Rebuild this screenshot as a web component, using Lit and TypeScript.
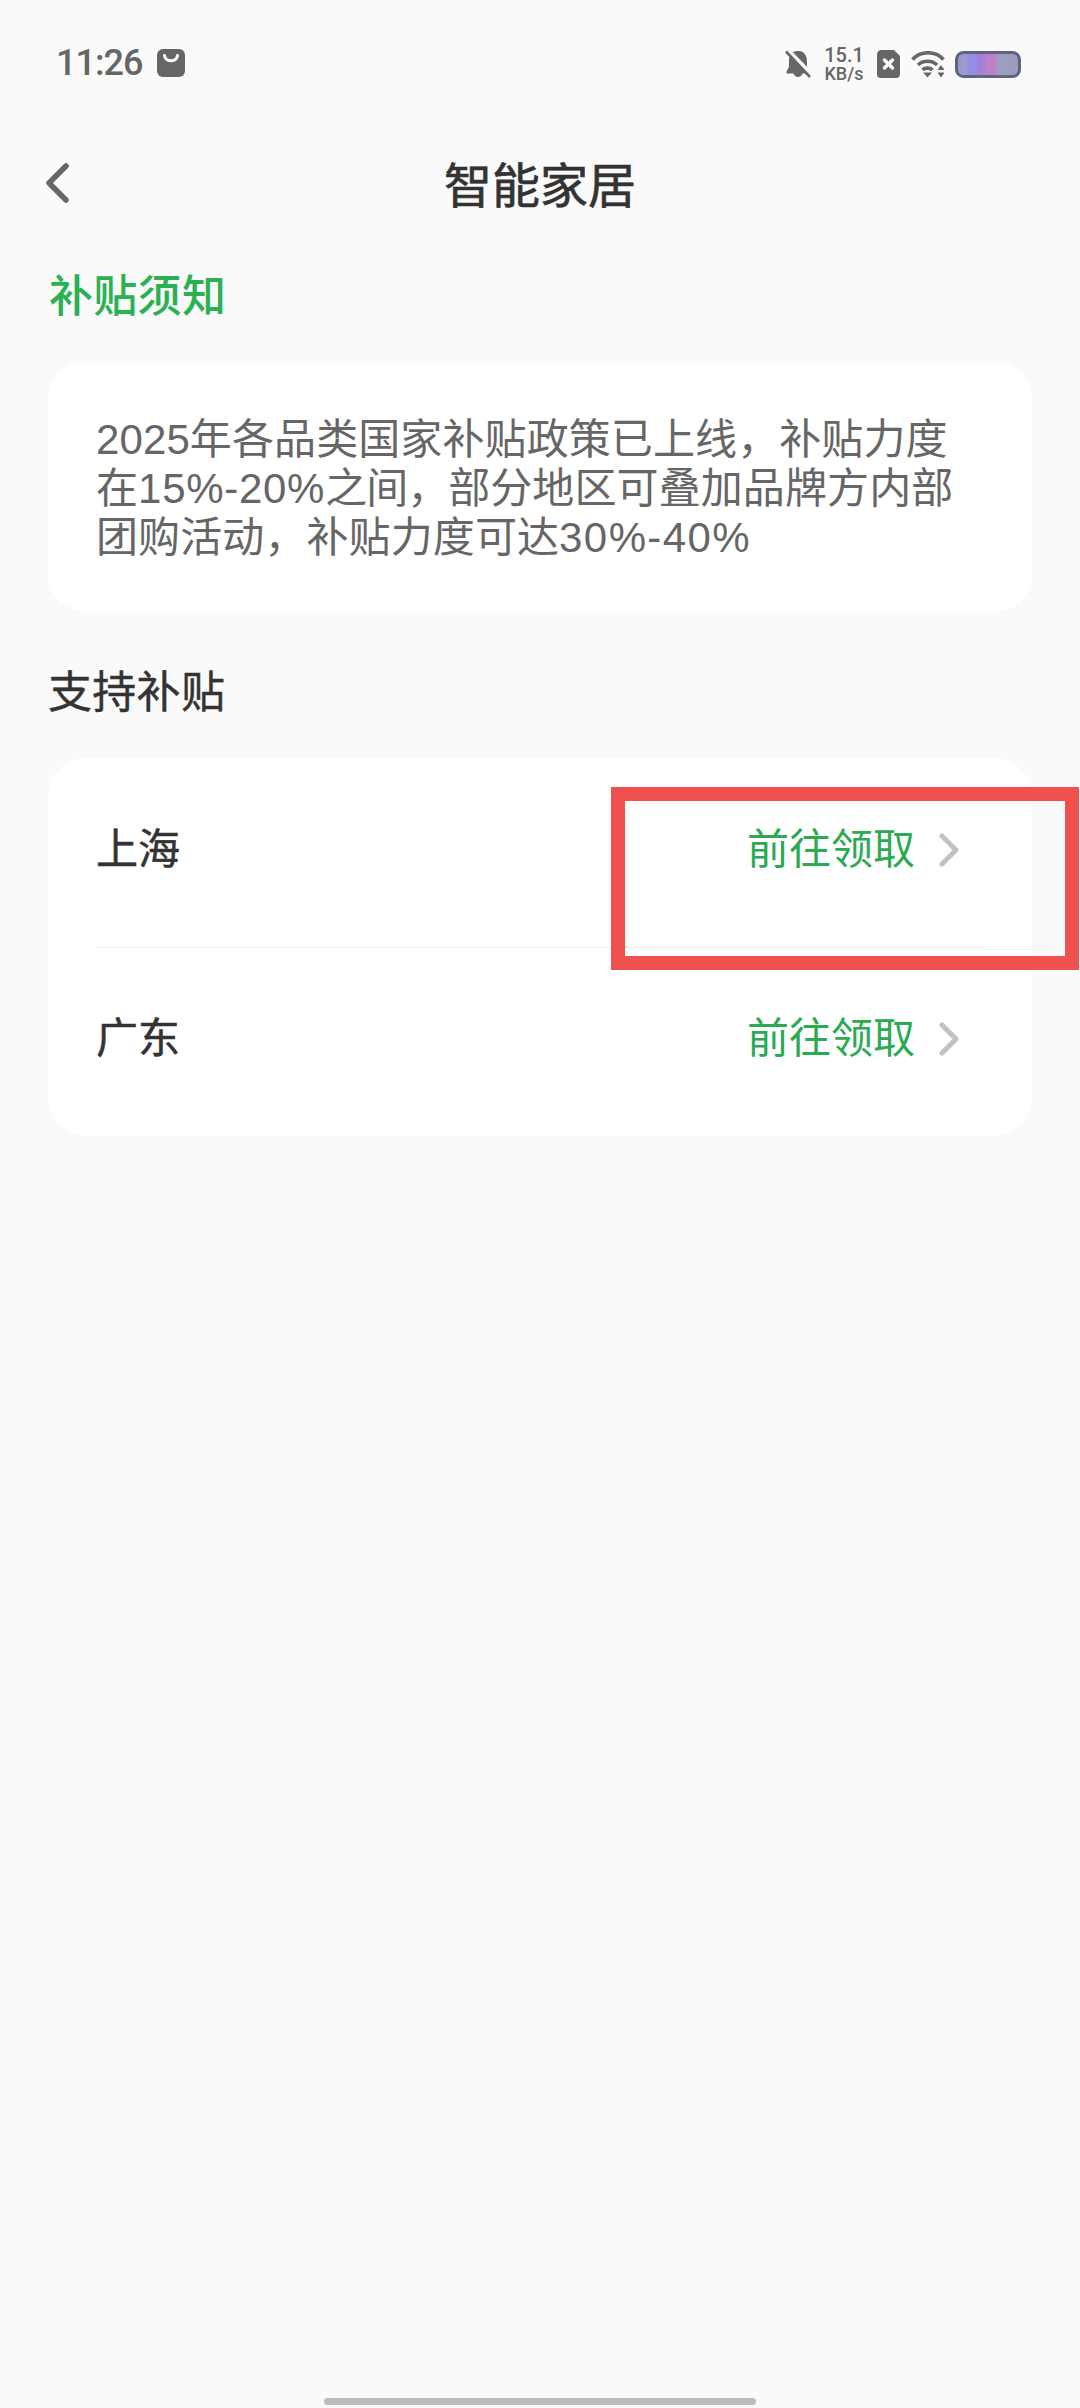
import { LitElement, html, css } from "lit";
import { customElement } from "lit/decorators.js";

@customElement("app-root")
export class AppRoot extends LitElement {
  static styles = css`
    :host { display: block; width: 1080px; height: 2408px; background: #fafafa; position: relative; overflow: hidden;
      font-family: "Liberation Sans", "Noto Sans CJK SC", sans-serif; }
    .status { height: 128px; box-sizing: border-box; padding: 43px 58px 0 56px; display: flex; align-items: flex-start; justify-content: space-between; color: #666; }
    .status-left { display: flex; align-items: center; gap: 15px; height: 40px; }
    .time { font-family: Roboto, sans-serif; font-size: 36px; line-height: 40px; font-weight: 500; letter-spacing: -1px; }
    .status-right { display: flex; align-items: center; height: 40px; margin-top: 1px; }
    .net { font-family: Roboto, sans-serif; font-weight: 500; font-size: 18px; line-height: 18px; margin: 0 14px; width: 38px; white-space: nowrap; display: flex; flex-direction: column; align-items: center; }
    .net .a { font-size: 20px; line-height: 19px; }
    .sim { margin-right: 11px; }
    .wifi { margin-right: 9px; }
    .header { height: 86px; position: relative; display: flex; align-items: center; justify-content: center; margin-top: 16px; }
    .back { position: absolute; left: 43px; top: 18px; }
    .title { font-size: 48px; line-height: 60px; color: #333; -webkit-text-stroke: 0.7px #333; }
    .section-green { font-size: 44px; line-height: 60px; font-weight: 500; color: #2bb052; margin: 37px 0 0 49px; letter-spacing: 0.3px; }
    .notice { margin: 34px 48px 0; background: #fff; border-radius: 38px; height: 251px; box-sizing: border-box; padding: 54px 46px 0 48px; font-size: 42px; line-height: 49px; color: #666; letter-spacing: 0.1px; }
    .notice div { white-space: nowrap; }
    .lat2 { letter-spacing: 0.7px; }
    .tight { letter-spacing: -1px; }
    .lat3 { letter-spacing: 1.4px; }
    .section { font-size: 44px; line-height: 60px; color: #333; -webkit-text-stroke: 0.4px #333; margin: 51px 0 0 48px; letter-spacing: 0.3px; }
    .card { margin: 35px 48px 0; background: #fff; border-radius: 38px; padding: 0 49px 0 48px; height: 378px; box-sizing: border-box; }
    .row { height: 189px; display: flex; align-items: center; justify-content: space-between; box-sizing: border-box; }
    .row + .row { border-top: 1px solid #eeeeea; }
    .name { font-size: 42px; color: #333; line-height: 60px; -webkit-text-stroke: 0.5px #333; }
    .link { display: flex; align-items: center; gap: 24px; font-size: 42px; line-height: 60px; color: #2baa52; margin-right: 24px; }
    .row-inner { display: flex; align-items: center; justify-content: space-between; width: 100%; margin-top: -6px; }
    .red { position: absolute; left: 611px; top: 787px; width: 468px; height: 183px; box-sizing: border-box; border: 14px solid #ef524e; }
    .home { position: absolute; left: 324px; top: 2398px; width: 432px; height: 7px; border-radius: 4px; background: #bbb; }
    svg { display: block; }
  `;

  private chevron() {
    return html`<svg width="20" height="34" viewBox="0 0 20 34"><path d="M3 3 L17 17 L3 31" fill="none" stroke="#c2c2c2" stroke-width="5" stroke-linecap="round" stroke-linejoin="round"/></svg>`;
  }

  private row(name: string) {
    return html`<div class="row"><div class="row-inner">
      <span class="name">${name}</span>
      <span class="link"><span>前往领取</span>${this.chevron()}</span>
    </div></div>`;
  }

  render() {
    return html`
      <div class="status">
        <div class="status-left">
          <span class="time">11:26</span>
          <svg width="28" height="28" viewBox="0 0 28 28"><rect width="28" height="28" rx="6" fill="#666"/><path d="M7.5 6.5 C8.5 13.5 19.5 13.5 20.5 6.5" fill="none" stroke="#fff" stroke-width="3" stroke-linecap="round"/></svg>
        </div>
        <div class="status-right">
          <svg width="26" height="28" viewBox="0 0 26 28"><path d="M13 1 C6.5 1 4 6 4 11 L4 17 L1.5 21.5 L1.5 23.5 L8.5 23.5 C9.5 28 16.5 28 17.5 23.5 L24.5 23.5 L24.5 21.5 L22 17 L22 11 C22 6 19.5 1 13 1 Z" fill="#666"/><path d="M3 0 L27 25" stroke="#fafafa" stroke-width="4"/><path d="M1 1.5 L25 27" stroke="#666" stroke-width="2.6"/></svg>
          <div class="net"><span class="a">15.1</span><span>KB/s</span></div>
          <svg class="sim" width="23" height="28" viewBox="0 0 23 28"><path d="M5 0 L17 0 L23 6 L23 24 Q23 28 19 28 L4 28 Q0 28 0 24 L0 5 Q0 0 5 0 Z" fill="#666"/><path d="M7.5 10 L15.5 18 M15.5 10 L7.5 18" stroke="#fff" stroke-width="3.4" stroke-linecap="round"/></svg>
          <svg class="wifi" width="34" height="27" viewBox="0 0 34 27">
            <g fill="none" stroke="#666" stroke-width="3.6"><path d="M1.5 8.5 C9.5 -0.5 24.5 -0.5 32.5 8.5"/><path d="M7 14 C12 9 21 9 26 14"/><path d="M11.5 18.8 C14 16.6 19 16.6 21.5 18.8"/></g>
            <path d="M12 21.5 L21 21.5 L16.5 26.5 Z M30 14 L33.5 19 L26.5 19 Z M26.5 21.5 L33.5 21.5 L30 26.5 Z" fill="#666"/>
          </svg>
          <svg width="68" height="27" viewBox="0 0 68 27">
            <defs><linearGradient id="b" x1="0" x2="1" y1="0" y2="0">
              <stop offset="0" stop-color="#949ec4"/><stop offset=".15" stop-color="#9a9bd0"/><stop offset=".2" stop-color="#8f8fe8"/><stop offset=".3" stop-color="#9a8ae4"/><stop offset=".36" stop-color="#a080d8"/><stop offset=".44" stop-color="#a682d4"/><stop offset=".48" stop-color="#b484cc"/><stop offset=".58" stop-color="#c47cc8"/><stop offset=".68" stop-color="#9f9dc0"/><stop offset="1" stop-color="#989dbc"/>
            </linearGradient></defs>
            <rect x="2.5" y="1.5" width="63" height="24" rx="7" fill="url(#b)" stroke="#5f6580" stroke-width="3"/>
          </svg>
        </div>
      </div>
      <div class="header">
        <svg class="back" width="28" height="42" viewBox="0 0 28 42"><path d="M23 4 L6 21 L23 38" fill="none" stroke="#666" stroke-width="5.5" stroke-linecap="round" stroke-linejoin="round"/></svg>
        <span class="title">智能家居</span>
      </div>
      <div class="section-green">补贴须知</div>
      <div class="notice">
        <div>2025年各品类国家补贴政策已上线，补贴力度</div>
        <div>在<span class="lat2">15%-20%</span><span class="tight">之间，</span>部分地区可叠加品牌方内部</div>
        <div>团购活动，补贴力度可达<span class="lat3">30%-40%</span></div>
      </div>
      <div class="section">支持补贴</div>
      <div class="card">
        ${this.row("上海")}
        ${this.row("广东")}
      </div>
      <div class="red"></div>
      <div class="home"></div>
    `;
  }
}
